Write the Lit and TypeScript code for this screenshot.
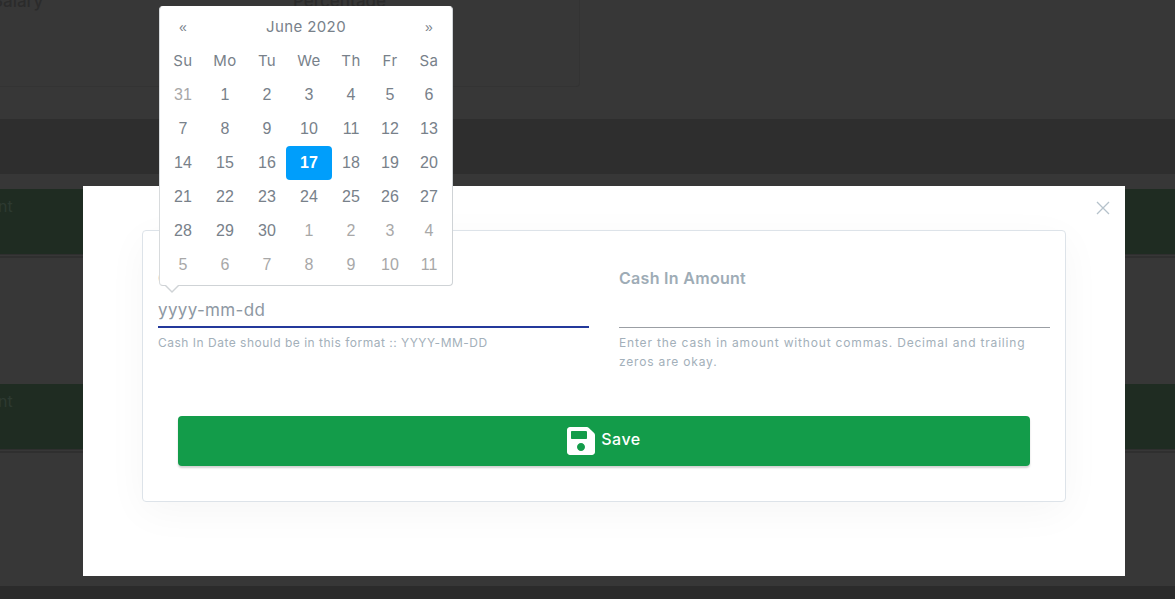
import { LitElement, html, css } from "lit";
import { customElement } from "lit/decorators.js";

const WEEK = ["Su", "Mo", "Tu", "We", "Th", "Fr", "Sa"];
const DAYS: [number, boolean][] = [
  [31, true],
  ...Array.from({ length: 30 }, (_, i) => [i + 1, false] as [number, boolean]),
  ...Array.from({ length: 11 }, (_, i) => [i + 1, true] as [number, boolean]),
];

@customElement("app-root")
export class AppRoot extends LitElement {
  static styles = css`
    :host {
      display: block;
      font-family: Inter, "Liberation Sans", sans-serif;
    }
    .page {
      position: relative;
      width: 1175px;
      height: 599px;
      overflow: hidden;
      background: #373737;
      display: flex;
      flex-direction: column;
    }
    .top {
      height: 119px;
      flex: none;
      box-sizing: border-box;
      overflow: hidden;
    }
    .top-card {
      width: 580px;
      box-sizing: border-box;
      border-right: 1px solid #333;
      border-bottom: 1px solid #333;
      border-bottom-right-radius: 4px;
      display: flex;
      color: #2b2b2b;
      font-size: 17px;
      font-weight: 500;
      line-height: 22px;
      margin-top: -10px;
      height: 97px;
    }
    .top-card span:first-child {
      margin-left: -8px;
      width: 301px;
    }
    .band {
      height: 55px;
      flex: none;
      background: #2e2e2e;
    }
    .gap {
      height: 15px;
      flex: none;
    }
    .row-green {
      height: 65px;
      flex: none;
      background: #1f2c22;
      color: #2d3a31;
      font-size: 16px;
      line-height: 20px;
      padding-top: 7px;
      box-sizing: border-box;
    }
    .row-green span {
      display: block;
      margin-left: -46px;
    }
    .sep {
      height: 1px;
      flex: none;
      margin-bottom: 1px;
      background: #2f2f2f;
    }
    .sep.b {
      height: 2px;
      margin-bottom: 0;
    }
    .plain {
      height: 126px;
      flex: none;
    }
    .last {
      height: 133px;
      flex: none;
    }
    .foot {
      flex: 1;
      background: #2b2b2b;
    }
    .modal {
      position: absolute;
      left: 83px;
      top: 186px;
      width: 1042px;
      box-sizing: border-box;
      background: #fff;
      padding: 44px 59px 74px;
    }
    .close {
      position: absolute;
      left: 1013px;
      top: 15px;
      width: 14px;
      height: 14px;
      display: block;
    }
    .card {
      border: 1px solid #dde3e9;
      border-radius: 4px;
      box-shadow: 0 10px 40px rgba(0, 0, 0, 0.04);
      padding: 35px 15px 35px;
    }
    .cols {
      display: grid;
      grid-template-columns: 431px 431px;
      column-gap: 30px;
    }
    .label {
      font-size: 16px;
      font-weight: 600;
      line-height: 24px;
      color: #9eacb6;
      letter-spacing: 0.3px;
    }
    .input {
      height: 38px;
      box-sizing: border-box;
      border-bottom: 1px solid #9b9fa4;
      font-size: 17px;
      line-height: 40px;
      color: #8e98a3;
    }
    .input.focus {
      border-bottom: 2px solid #24399b;
    }
    .ph {
      letter-spacing: 0.35px;
    }
    .help {
      margin-top: 5px;
      font-size: 12px;
      line-height: 19px;
      color: #a3b0ba;
      letter-spacing: 0.5px;
    }
    .help.long {
      letter-spacing: 0.82px;
    }
    .save {
      margin: 45px 20px 0;
      height: 50px;
      background: #139c4a;
      border-radius: 4px;
      box-shadow: 0 2px 2px rgba(0, 0, 0, 0.18);
      display: flex;
      align-items: center;
      justify-content: center;
      gap: 6px;
      color: #fff;
      font-size: 16px;
      font-weight: 500;
    }
    .save span {
      padding-bottom: 5px;
      letter-spacing: 0.5px;
    }
    .save svg {
      width: 28px;
      height: 32px;
      fill: #fff;
      display: block;
    }
    .picker {
      position: absolute;
      left: 159px;
      top: 6px;
      width: 294px;
      height: 280px;
      box-sizing: border-box;
      background: #fff;
      border: 1px solid #cfd3d6;
      border-top-color: #fff;
      border-left-color: #d8dbdd;
      border-radius: 4px;
      padding: 3px 4px;
      display: grid;
      grid-template-columns: 38px 46px 38px 46px 38px 40px 38px;
      grid-auto-rows: 34px;
      align-items: center;
      justify-items: center;
    }
    .picker::before {
      content: "";
      position: absolute;
      left: 5px;
      bottom: -8px;
      width: 0;
      height: 0;
      border-left: 7px solid transparent;
      border-right: 7px solid transparent;
      border-top: 7px solid #cfd3d6;
    }
    .picker::after {
      content: "";
      position: absolute;
      left: 6px;
      bottom: -6px;
      width: 0;
      height: 0;
      border-left: 6px solid transparent;
      border-right: 6px solid transparent;
      border-top: 6px solid #fff;
    }
    .head {
      font-size: 15px;
      line-height: 20px;
      color: #78818a;
      letter-spacing: 0.4px;
    }
    .title {
      grid-column: span 5;
      letter-spacing: 0.4px;
    }
    .arrow {
      font-family: "Liberation Sans", sans-serif;
      font-size: 14px;
    }
    .day {
      font-family: "Liberation Sans", sans-serif;
      font-size: 16px;
      color: #78818a;
    }
    .day.old {
      color: #a8a8a8;
    }
    .day.active {
      justify-self: stretch;
      align-self: stretch;
      display: flex;
      align-items: center;
      justify-content: center;
      background: #009efb;
      color: #fff;
      font-weight: 700;
      border-radius: 4px;
    }
  `;

  render() {
    return html`
      <div class="page">
        <div class="top">
          <div class="top-card"><span>Salary</span><span>Percentage</span></div>
        </div>
        <div class="band"></div>
        <div class="gap"></div>
        <div class="row-green"><span>Amount</span></div>
        <div class="sep"></div>
        <div class="sep b"></div>
        <div class="plain"></div>
        <div class="row-green"><span>Amount</span></div>
        <div class="sep"></div>
        <div class="sep b"></div>
        <div class="last"></div>
        <div class="foot"></div>

        <div class="modal">
          <svg class="close" viewBox="0 0 14 14" fill="none" stroke="#b5c2cb" stroke-width="1.3">
            <path d="M1 1L13 13M13 1L1 13" />
          </svg>
          <div class="card">
            <div class="cols">
              <div>
                <div class="label">Cash In Date</div>
                <div class="input focus"><span class="ph">yyyy-mm-dd</span></div>
                <div class="help">Cash In Date should be in this format :: YYYY-MM-DD</div>
              </div>
              <div>
                <div class="label">Cash In Amount</div>
                <div class="input"></div>
                <div class="help long">Enter the cash in amount without commas. Decimal and trailing zeros are okay.</div>
              </div>
            </div>
            <div class="save">
              <svg viewBox="0 0 448 512">
                <path d="M433.941 129.941l-83.882-83.882A48 48 0 0 0 316.118 32H48C21.49 32 0 53.49 0 80v352c0 26.51 21.49 48 48 48h352c26.51 0 48-21.49 48-48V163.882a48 48 0 0 0-14.059-33.941zM224 416c-35.346 0-64-28.654-64-64 0-35.346 28.654-64 64-64s64 28.654 64 64c0 35.346-28.654 64-64 64zm96-304.52V212c0 6.627-5.373 12-12 12H76c-6.627 0-12-5.373-12-12V108c0-6.627 5.373-12 12-12h228.52c3.183 0 6.235 1.264 8.485 3.515l3.48 3.48A11.996 11.996 0 0 1 320 111.48z" />
              </svg>
              <span>Save</span>
            </div>
          </div>
        </div>

        <div class="picker">
          <span class="head arrow">«</span>
          <span class="head title">June 2020</span>
          <span class="head arrow">»</span>
          ${WEEK.map((d) => html`<span class="head">${d}</span>`)}
          ${DAYS.map(([n, old]) => {
            const active = n === 17 && !old;
            return html`<span class="day ${old ? "old" : ""} ${active ? "active" : ""}">${n}</span>`;
          })}
        </div>
      </div>
    `;
  }
}
